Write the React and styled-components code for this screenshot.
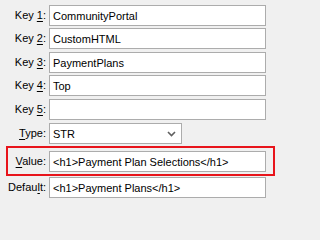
import React from 'react'
import styled, {createGlobalStyle} from 'styled-components';

const GlobalStyle = createGlobalStyle`
    html, body {
        margin:0;
        padding:0;
        background:#f0f0f0;
    }
    body {
        font-family:"Liberation Sans", Arial, sans-serif;
        font-size:11px;
        color:#000;
    }
`;

const fields = [
    {label: 'Key ', key: '1', after: ':', value: 'CommunityPortal', mt: 5},
    {label: 'Key ', key: '2', after: ':', value: 'CustomHTML', mt: 2},
    {label: 'Key ', key: '3', after: ':', value: 'PaymentPlans', mt: 3},
    {label: 'Key ', key: '4', after: ':', value: 'Top', mt: 2},
    {label: 'Key ', key: '5', after: ':', value: '', mt: 3},
];

export default function App() {
    return (
        <>
            <GlobalStyle />
            <Form>
                {fields.map((f) => (
                    <Row key={f.key} $mt={f.mt}>
                        <Label>{f.label}<u>{f.key}</u>{f.after}</Label>
                        <TextBox>{f.value}</TextBox>
                    </Row>
                ))}
                <Row $mt={3}>
                    <Label><u>T</u>ype:</Label>
                    <Select>
                        <span>STR</span>
                        <svg width="9" height="6" viewBox="0 0 9 6">
                            <path d="M1 1 L4.5 4.5 L8 1" fill="none" stroke="#606060" strokeWidth="1.6" />
                        </svg>
                    </Select>
                </Row>
                <Row $mt={7} $highlight>
                    <Label><u>V</u>alue:</Label>
                    <TextBox>&lt;h1&gt;Payment Plan Selections&lt;/h1&gt;</TextBox>
                </Row>
                <Row $mt={5}>
                    <Label>Defau<u>l</u>t:</Label>
                    <TextBox>&lt;h1&gt;Payment Plans&lt;/h1&gt;</TextBox>
                </Row>
            </Form>
        </>
    )
}

const Form = styled.div`
    display:flex;
    flex-direction:column;
    width:271px;
`;
const Row = styled.div`
    position:relative;
    display:grid;
    grid-template-columns:46px 217px;
    column-gap:3px;
    align-items:center;
    margin-top:${(p) => p.$mt}px;
    ${(p) => p.$highlight && `
        &::before{
            content:'';
            position:absolute;
            top:-5px;
            left:6px;
            right:-4px;
            bottom:-4px;
            border:2px solid #e8141b;
            pointer-events:none;
        }
    `}
    & u{
        text-decoration:underline;
        text-underline-offset:2px;
    }
`;
const Label = styled.label`
    text-align:right;
    white-space:nowrap;
    line-height:13px;
`;
const TextBox = styled.div`
    box-sizing:border-box;
    height:21px;
    background:#fff;
    border:1px solid #acacac;
    padding:0 3px;
    display:flex;
    align-items:center;
    white-space:nowrap;
    overflow:hidden;
`;
const Select = styled.div`
    box-sizing:border-box;
    width:133px;
    height:21px;
    background:#fff;
    border:1px solid #acacac;
    padding:0 5px 0 3px;
    display:flex;
    align-items:center;
    justify-content:space-between;
`;
